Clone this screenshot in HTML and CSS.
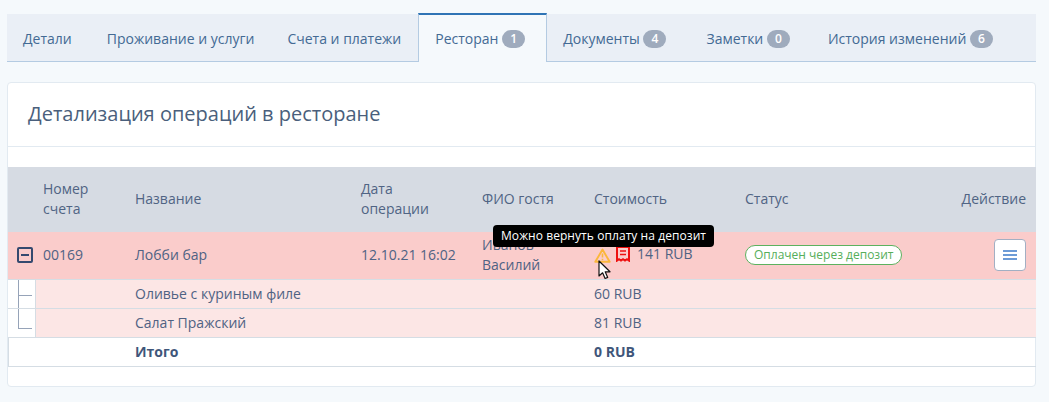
FILE: index.html
```html
<!DOCTYPE html>
<html lang="ru">
<head>
<meta charset="utf-8">
<title>Ресторан</title>
<link rel="stylesheet" href="styles.css">
</head>
<body>
<nav class="tabs">
  <a class="tab first-tab">Детали</a>
  <a class="tab">Проживание и услуги</a>
  <a class="tab">Счета и платежи</a>
  <a class="tab active">Ресторан <span class="badge">1</span></a>
  <a class="tab with-badge wide">Документы <span class="badge">4</span></a>
  <a class="tab with-badge narrow">Заметки <span class="badge">0</span></a>
  <a class="tab with-badge">История изменений <span class="badge">6</span></a>
</nav>
<section class="panel">
  <h2 class="panel-title">Детализация операций в ресторане</h2>
  <div class="spacer"></div>
  <table class="ops">
    <colgroup>
      <col class="c0"><col class="c1"><col class="c2"><col class="c3"><col class="c4"><col class="c5"><col class="c6"><col class="c7">
    </colgroup>
    <thead>
      <tr>
        <th></th><th>Номер<br>счета</th><th>Название</th><th>Дата<br>операции</th><th>ФИО гостя</th><th>Стоимость</th><th>Статус</th><th class="right">Действие</th>
      </tr>
    </thead>
    <tbody>
      <tr class="main">
        <td class="toggle-cell"><span class="toggle"></span></td>
        <td>00169</td>
        <td>Лобби бар</td>
        <td>12.10.21 16:02</td>
        <td>Иванов<br>Василий</td>
        <td>
          <span class="cost">
            <svg class="warn" width="17" height="15" viewBox="0 0 17 15"><path d="M8.5 1.6 1.3 13.8h14.4z" fill="none" stroke="#fbb73c" stroke-width="1.9" stroke-linejoin="round"/><path d="M8.5 5.5v4M8.5 10.8v1.4" stroke="#fbb73c" stroke-width="1.6"/></svg>
            <svg class="receipt" width="14" height="16" viewBox="0 0 14 16"><path d="M1 1h12v13.6l-2-1.4-2 1.4-2-1.4-2 1.4-2-1.4-2 1.4z" fill="none" stroke="#ee1111" stroke-width="2"/><path d="M4 5h6M4 8.5h6" stroke="#ee1111" stroke-width="1.7"/></svg>
            <span class="amount">141 RUB</span>
          </span>
        </td>
        <td><span class="status">Оплачен через депозит</span></td>
        <td class="right"><button class="menu-btn" aria-label="Меню"><span></span><span></span><span></span></button></td>
      </tr>
      <tr class="sub">
        <td class="tree tree-mid"></td><td></td><td>Оливье с куриным филе</td><td></td><td></td><td>60 RUB</td><td></td><td></td>
      </tr>
      <tr class="sub">
        <td class="tree tree-end"></td><td></td><td>Салат Пражский</td><td></td><td></td><td>81 RUB</td><td></td><td></td>
      </tr>
      <tr class="total">
        <td></td><td></td><td>Итого</td><td></td><td></td><td>0 RUB</td><td></td><td></td>
      </tr>
    </tbody>
  </table>
  <div class="tooltip">Можно вернуть оплату на депозит</div>
  <svg class="cursor" width="14" height="20" viewBox="0 0 14 20"><path d="M1 1v15l3.6-3.2 2.5 5.7 2.6-1.1-2.5-5.6H12z" fill="#fff" stroke="#111" stroke-width="1.2" stroke-linejoin="round"/></svg>
</section>
</body>
</html>
```
FILE: styles.css
```css
* { box-sizing: border-box; }
html, body { margin: 0; }
body {
  height: 402px;
  overflow: hidden;
  background: #f5f9fc;
  padding: 14px 13px 0 7px;
  font-family: "Open Sans", "Noto Sans", sans-serif;
  font-size: 14px;
  color: #4f6283;
}
.tabs {
  display: flex;
  height: 48px;
  background: #eaeff6;
  border-bottom: 1px solid #b4cbe2;
}
.tab {
  display: block;
  padding: 15px 17px 0 16px;
  color: #436a94;
  line-height: 19px;
  white-space: nowrap;
}
.first-tab { padding-right: 19px; }
.with-badge { padding-right: 23px; }
.wide { padding-right: 24px; }
.narrow { padding-right: 22px; }
.active {
  width: 129px;
  height: 49px;
  margin-top: -1px;
  padding: 14px 0 0 16px;
  background: #f5f9fc;
  border: 1px solid #b4cbe2;
  border-top: 2px solid #2f74b5;
  border-bottom: 0;
}
.badge {
  display: inline-block;
  min-width: 23px;
  height: 18px;
  line-height: 18px;
  padding: 0 7px;
  border-radius: 9px;
  background: #9fabbd;
  color: #fff;
  font-size: 12px;
  font-weight: 600;
  text-align: center;
  vertical-align: 1px;
}
.panel {
  position: relative;
  margin-top: 20px;
  height: 305px;
  background: #fff;
  border: 1px solid #e2eaf1;
  border-radius: 4px;
}
.panel-title {
  margin: 0;
  height: 64px;
  padding: 17px 20px 0;
  font-size: 20px;
  font-weight: 400;
  line-height: 28px;
  color: #4a5f7c;
  border-bottom: 1px solid #e2eaf1;
}
.spacer { height: 20px; }
.ops {
  width: 1028px;
  table-layout: fixed;
  border-collapse: collapse;
  line-height: 20px;
}
.c0 { width: 27px; }
.c1 { width: 92px; }
.c2 { width: 226px; }
.c3 { width: 121px; }
.c4 { width: 112px; }
.c5 { width: 151px; }
.c6 { width: 200px; }
.c7 { width: 99px; }
.ops th, .ops td { padding: 0 8px 2px; text-align: left; font-weight: inherit; }
.ops th:first-child, .ops td:first-child { padding: 0; }
.ops thead tr { height: 65px; background: #d6dbe3; font-weight: 400; }
.ops th { color: #506484; }
.ops th.right, .ops td.right { text-align: right; padding-right: 10px; padding-left: 0; }
.main { height: 47px; background: #facccb; border-bottom: 1px solid #d5dde4; }
.ops .main td { padding-bottom: 1px; }
.ops .sub td, .ops .total td { padding-bottom: 0; }
.toggle {
  display: block;
  position: relative;
  width: 16px;
  height: 16px;
  margin-left: 9px;
  border: 2px solid #34496f;
  border-radius: 2px;
}
.toggle::after {
  content: "";
  position: absolute;
  left: 2px;
  right: 2px;
  top: 5px;
  height: 2px;
  background: #34496f;
}
.cost { display: flex; align-items: center; }
.warn { margin-right: 5px; margin-top: 1px; }
.receipt { margin-right: 7px; margin-top: -1px; }
.amount { position: relative; top: -1px; }
.status {
  display: inline-block;
  height: 20px;
  line-height: 18px;
  padding: 0 8px;
  border: 1px solid #5cb25f;
  border-radius: 10px;
  background: #fff;
  color: #56ae5a;
  font-size: 12px;
  white-space: nowrap;
}
.menu-btn {
  display: inline-flex;
  flex-direction: column;
  justify-content: center;
  gap: 2px;
  width: 32px;
  height: 32px;
  padding: 0 8px;
  background: #fff;
  border: 1px solid #a2afc3;
  border-radius: 4px;
  vertical-align: middle;
}
.menu-btn span { display: block; height: 2px; background: #6d9bd6; }
.sub { height: 29px; background: #fce6e5; border-bottom: 1px solid #d5dde4; }
.tree { background: #fff; position: relative; border-right: 1px solid #d5dde4; }
.tree::before {
  content: "";
  position: absolute;
  left: 10px;
  top: 0;
  width: 13px;
  border-left: 1px solid #96a3b8;
  border-bottom: 1px solid #96a3b8;
}
.tree-mid::before { height: 15px; }
.tree-mid::after {
  content: "";
  position: absolute;
  left: 10px;
  top: 15px;
  bottom: 0;
  border-left: 1px solid #96a3b8;
}
.tree-end::before { height: 19px; }
.total { height: 29px; font-weight: 700; color: #3f567a; border-bottom: 1px solid #d5dde4; box-shadow: inset 1px 0 0 #d5dde4; }
.tooltip {
  position: absolute;
  left: 485px;
  top: 142px;
  height: 22px;
  padding: 0 8px;
  border-radius: 4px;
  background: #000;
  color: #fff;
  font-size: 12px;
  line-height: 22px;
  letter-spacing: .07px;
  white-space: nowrap;
}
.cursor { position: absolute; left: 590px; top: 177px; }
```
